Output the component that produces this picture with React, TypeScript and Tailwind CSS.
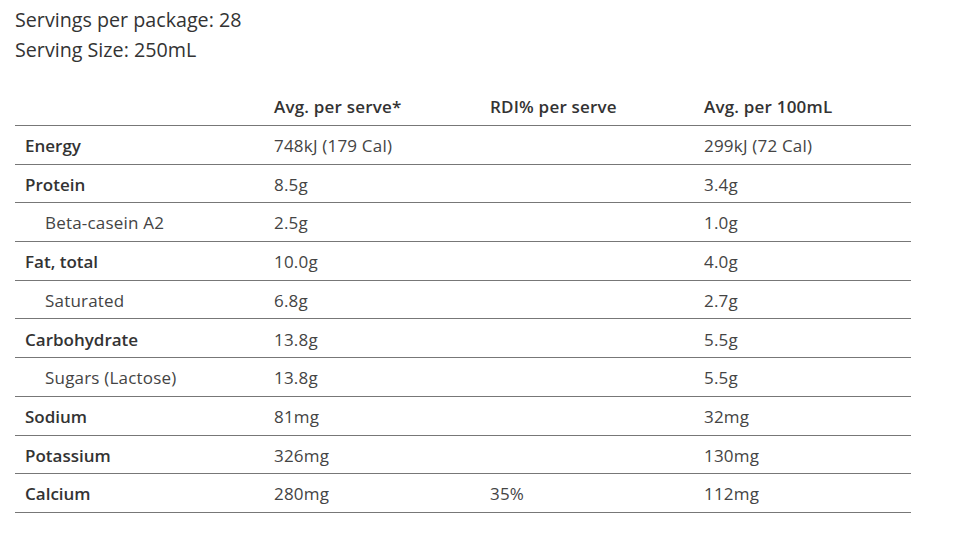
const rows = [
  { name: "Energy", bold: true, serve: "748kJ (179 Cal)", rdi: "", per100: "299kJ (72 Cal)" },
  { name: "Protein", bold: true, serve: "8.5g", rdi: "", per100: "3.4g" },
  { name: "Beta-casein A2", bold: false, serve: "2.5g", rdi: "", per100: "1.0g" },
  { name: "Fat, total", bold: true, serve: "10.0g", rdi: "", per100: "4.0g" },
  { name: "Saturated", bold: false, serve: "6.8g", rdi: "", per100: "2.7g" },
  { name: "Carbohydrate", bold: true, serve: "13.8g", rdi: "", per100: "5.5g" },
  { name: "Sugars (Lactose)", bold: false, serve: "13.8g", rdi: "", per100: "5.5g" },
  { name: "Sodium", bold: true, serve: "81mg", rdi: "", per100: "32mg" },
  { name: "Potassium", bold: true, serve: "326mg", rdi: "", per100: "130mg" },
  { name: "Calcium", bold: true, serve: "280mg", rdi: "35%", per100: "112mg" },
];

const App = () => {
  return (
    <div className="min-h-[542px] bg-white pl-[15px] pr-[45px] pt-[5px] text-[#333] font-['Open_Sans',sans-serif]">
      <div className="text-[19.7px] leading-[30px]">
        <p>Servings per package: 28</p>
        <p>Serving Size: 250mL</p>
      </div>

      <div className="mt-[22px] w-[896px] text-[17px] tracking-[0.2px]">
        {/* header */}
        <div className="grid grid-cols-[249px_216px_214px_1fr] h-[39px] items-center pt-[1px] border-b border-[#777] font-semibold">
          <div />
          <div className="pl-[10px]">Avg. per serve*</div>
          <div className="pl-[10px]">RDI% per serve</div>
          <div className="pl-[10px]">Avg. per 100mL</div>
        </div>

        {rows.map((row) => (
          <div
            key={row.name}
            className="grid grid-cols-[249px_216px_214px_1fr] h-[38.7px] items-center pt-[2px] border-b border-[#777] text-[#444]"
          >
            <div className={row.bold ? "pl-[10px] font-semibold text-[#333] tracking-normal" : "pl-[30px]"}>
              {row.name}
            </div>
            <div className="pl-[10px]">{row.serve}</div>
            <div className="pl-[10px]">{row.rdi}</div>
            <div className="pl-[10px]">{row.per100}</div>
          </div>
        ))}
      </div>
    </div>
  );
};

export default App;
